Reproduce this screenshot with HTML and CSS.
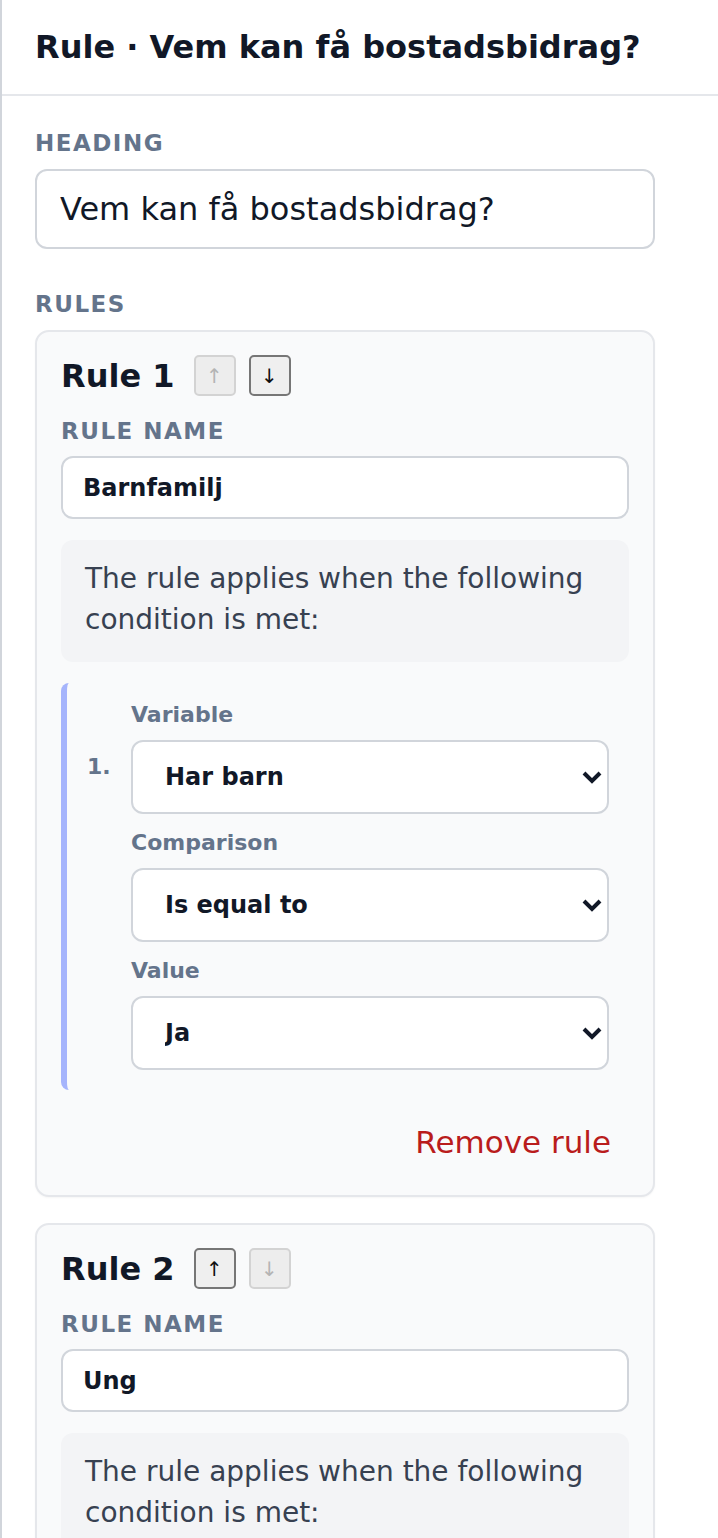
FILE: index.html
```html
<!DOCTYPE html>
<html lang="sv">
<head>
<meta charset="utf-8">
<title>Rule · Vem kan få bostadsbidrag?</title>
<link rel="stylesheet" href="styles.css">
</head>
<body>
<header class="topbar">
  <h1 class="title">Rule · Vem kan få bostadsbidrag?</h1>
</header>
<main class="content">
  <section class="section">
    <label class="label">Heading</label>
    <input class="text-input" type="text" value="Vem kan få bostadsbidrag?">
  </section>

  <section class="section">
    <div class="label">Rules</div>
    <div class="rules">
      <article class="rule-card">
        <div class="rule-head">
          <h2 class="rule-title">Rule 1</h2>
          <div class="move-btns">
            <button class="move-btn" disabled>↑</button>
            <button class="move-btn">↓</button>
          </div>
        </div>
        <label class="label label-sm">Rule name</label>
        <input class="name-input" type="text" value="Barnfamilj">
        <p class="info">The rule applies when the following condition is met:</p>
        <div class="condition">
          <div class="cond-num">1.</div>
          <div class="fields">
            <div class="field">
              <label class="field-label">Variable</label>
              <div class="select-wrap">
                <select class="select"><option>Har barn</option></select>
                <svg class="chev" viewBox="0 0 20 13" width="20" height="13"><polyline points="2,2 10,10 18,2" fill="none" stroke="#111827" stroke-width="4"/></svg>
              </div>
            </div>
            <div class="field">
              <label class="field-label">Comparison</label>
              <div class="select-wrap">
                <select class="select"><option>Is equal to</option></select>
                <svg class="chev" viewBox="0 0 20 13" width="20" height="13"><polyline points="2,2 10,10 18,2" fill="none" stroke="#111827" stroke-width="4"/></svg>
              </div>
            </div>
            <div class="field">
              <label class="field-label">Value</label>
              <div class="select-wrap">
                <select class="select"><option>Ja</option></select>
                <svg class="chev" viewBox="0 0 20 13" width="20" height="13"><polyline points="2,2 10,10 18,2" fill="none" stroke="#111827" stroke-width="4"/></svg>
              </div>
            </div>
          </div>
        </div>
        <div class="actions">
          <button class="remove-btn">Remove rule</button>
        </div>
      </article>

      <article class="rule-card">
        <div class="rule-head">
          <h2 class="rule-title">Rule 2</h2>
          <div class="move-btns">
            <button class="move-btn">↑</button>
            <button class="move-btn" disabled>↓</button>
          </div>
        </div>
        <label class="label label-sm">Rule name</label>
        <input class="name-input" type="text" value="Ung">
        <p class="info">The rule applies when the following condition is met:</p>
        <div class="condition">
          <div class="cond-num">1.</div>
          <div class="fields">
            <div class="field">
              <label class="field-label">Variable</label>
              <div class="select-wrap">
                <select class="select"><option>Ålder</option></select>
                <svg class="chev" viewBox="0 0 20 13" width="20" height="13"><polyline points="2,2 10,10 18,2" fill="none" stroke="#111827" stroke-width="4"/></svg>
              </div>
            </div>
            <div class="field">
              <label class="field-label">Comparison</label>
              <div class="select-wrap">
                <select class="select"><option>Is less than</option></select>
                <svg class="chev" viewBox="0 0 20 13" width="20" height="13"><polyline points="2,2 10,10 18,2" fill="none" stroke="#111827" stroke-width="4"/></svg>
              </div>
            </div>
          </div>
        </div>
        <div class="actions">
          <button class="remove-btn">Remove rule</button>
        </div>
      </article>
    </div>
  </section>
</main>
</body>
</html>
```

FILE: styles.css
```css
* { box-sizing: border-box; }

html, body { margin: 0; padding: 0; }

body {
  font-family: "DejaVu Sans", "Noto Sans", sans-serif;
  color: #111827;
  background: #ffffff;
  border-left: 2px solid #d1d5db;
  min-height: 100vh;
}

.topbar {
  padding: 27px 33px 27px 33px;
  border-bottom: 2px solid #e5e7eb;
}

.title {
  margin: 0;
  font-size: 32px;
  line-height: 40px;
  font-weight: 700;
  color: #111827;
}

.content {
  box-sizing: content-box;
  max-width: 620px;
  padding: 33px 33px 40px 33px;
}

.section + .section { margin-top: 41px; }

.label {
  display: block;
  font-size: 23px;
  line-height: 28px;
  font-weight: 700;
  letter-spacing: 1.5px;
  text-transform: uppercase;
  color: #64748b;
  margin-bottom: 12px;
}

.label-sm { margin-top: 21px; margin-bottom: 11px; }

.text-input {
  display: block;
  width: 100%;
  height: 80px;
  padding: 0 23px;
  border: 2px solid #d1d5db;
  border-radius: 12px;
  font-family: inherit;
  font-size: 32px;
  color: #111827;
  background: #fff;
  outline: none;
}

.rules {
  display: flex;
  flex-direction: column;
  gap: 26px;
}

.rule-card {
  background: #f9fafb;
  border: 2px solid #e5e7eb;
  border-radius: 14px;
  padding: 23px 24px 24px 24px;
  box-shadow: 0 1px 2px rgba(0, 0, 0, 0.04);
}

.rule-head {
  display: flex;
  align-items: center;
  gap: 19px;
  height: 41px;
}

.rule-title {
  margin: 0;
  font-size: 32px;
  line-height: 40px;
  font-weight: 700;
  color: #111827;
}

.move-btns {
  display: flex;
  gap: 13px;
}

.move-btn {
  width: 42px;
  height: 41px;
  padding: 0;
  font-family: "DejaVu Sans", sans-serif;
  font-size: 20px;
  line-height: 1;
  color: #101010;
  background: #efefef;
  border: 2px solid #767676;
  border-radius: 5px;
}

.move-btn:disabled {
  color: #b4b4b4;
  background: #ededed;
  border-color: #d3d3d3;
}

.name-input {
  display: block;
  width: 100%;
  height: 63px;
  padding: 0 20px;
  border: 2px solid #d1d5db;
  border-radius: 12px;
  font-family: inherit;
  font-size: 24px;
  font-weight: 700;
  color: #111827;
  background: #fff;
  outline: none;
}

.info {
  margin: 21px 0 0 0;
  padding: 18px 24px 22px 24px;
  background: #f3f4f6;
  border-radius: 12px;
  font-size: 28px;
  line-height: 41px;
  color: #374151;
}

.condition {
  margin-top: 21px;
  display: flex;
  border-left: 6px solid #a5b4fc;
  border-radius: 8px 0 0 8px;
  padding: 19px 20px 20px 20px;
}

.cond-num {
  width: 44px;
  flex: none;
  margin-top: 52px;
  font-size: 22px;
  line-height: 26px;
  font-weight: 700;
  color: #64748b;
}

.fields {
  flex: 1;
  display: flex;
  flex-direction: column;
  gap: 16px;
}

.field-label {
  display: block;
  font-size: 22px;
  line-height: 26px;
  font-weight: 700;
  color: #64748b;
  margin-bottom: 12px;
}

.select-wrap {
  position: relative;
}

.select {
  display: block;
  width: 100%;
  height: 74px;
  padding: 0 40px 0 32px;
  appearance: none;
  -webkit-appearance: none;
  border: 2px solid #d1d5db;
  border-radius: 12px;
  background: #fff;
  font-family: inherit;
  font-size: 24px;
  font-weight: 700;
  color: #111827;
  outline: none;
}

.chev {
  position: absolute;
  right: 7px;
  top: 31px;
  pointer-events: none;
}

.actions {
  display: flex;
  justify-content: flex-end;
  margin-top: 24px;
}

.remove-btn {
  margin-right: 0;
  padding: 10px 18px;
  border: none;
  background: transparent;
  font-family: inherit;
  font-size: 31px;
  line-height: 37px;
  color: #b91c1c;
}
```
